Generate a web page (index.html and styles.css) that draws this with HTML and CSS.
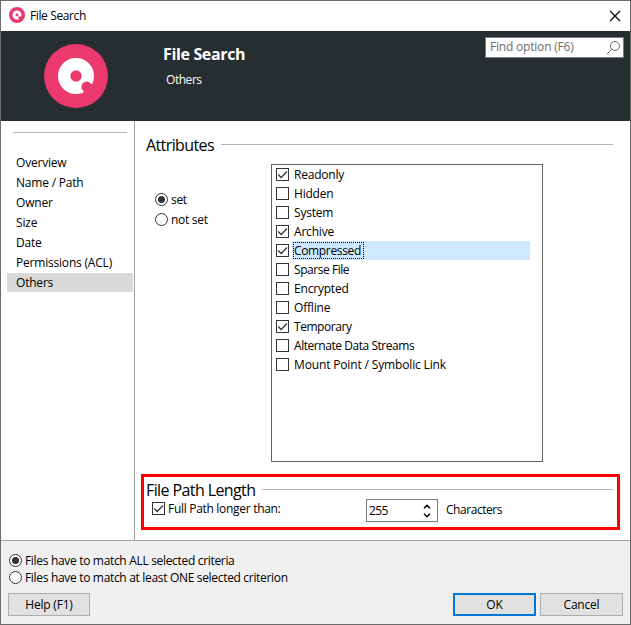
FILE: index.html
```html
<!DOCTYPE html>
<html lang="en">
<head>
<meta charset="utf-8">
<title>File Search</title>
<link rel="stylesheet" href="styles.css">
</head>
<body>
<svg class="defs" width="0" height="0">
  <symbol id="logo" viewBox="0 0 64 64">
    <circle cx="32" cy="32" r="32" fill="#ec3a6e"/>
    <circle cx="32" cy="32" r="18" fill="#fff"/>
    <circle cx="32" cy="32" r="5.700" fill="#ec3a6e"/>
    <circle cx="42.700" cy="42.700" r="5.300" fill="#ec3a6e"/>
    <path d="M42.700 42.700L47 40l4 0-10 12-1.500-4z" fill="#ec3a6e"/>
  </symbol>
  <symbol id="tick" viewBox="0 0 13 13">
    <path d="M2.200 6.500l3 3 5.800-6" fill="none" stroke="#333" stroke-width="1.300"/>
  </symbol>
</svg>
<div class="window">
  <header class="titlebar">
    <svg class="app-icon"><use href="#logo"/></svg>
    <span class="caption">File Search</span>
    <svg class="close" viewBox="0 0 12 12"><path d="M1 1l10 10M11 1L1 11" stroke="#000" stroke-width="1.200"/></svg>
  </header>
  <div class="banner">
    <svg class="logo"><use href="#logo"/></svg>
    <div class="banner-text">
      <h1>File Search</h1>
      <p>Others</p>
    </div>
    <div class="search">
      <span>Find option (F6)</span>
      <svg viewBox="0 0 14 14"><path d="M5.700 8.300L1 13" stroke="#666" stroke-width="1"/><circle cx="9" cy="5" r="4.500" fill="none" stroke="#666"/></svg>
    </div>
  </div>
  <div class="body">
    <nav class="sidebar">
      <ul>
        <li>Overview</li>
        <li>Name / Path</li>
        <li>Owner</li>
        <li>Size</li>
        <li>Date</li>
        <li>Permissions (ACL)</li>
        <li class="current">Others</li>
      </ul>
    </nav>
    <main class="content">
      <h2 class="section-title"><span>Attributes</span></h2>
      <div class="attributes">
        <div class="radios">
          <div class="option"><i class="radio on"></i><span>set</span></div>
          <div class="option"><i class="radio"></i><span>not set</span></div>
        </div>
        <ul class="listbox">
          <li><i class="box"><svg><use href="#tick"/></svg></i><span>Readonly</span></li>
          <li><i class="box"></i><span>Hidden</span></li>
          <li><i class="box"></i><span>System</span></li>
          <li><i class="box"><svg><use href="#tick"/></svg></i><span>Archive</span></li>
          <li class="selected"><i class="box"><svg><use href="#tick"/></svg></i><span><b>Compressed</b></span></li>
          <li><i class="box"></i><span class="tight">Sparse File</span></li>
          <li><i class="box"></i><span>Encrypted</span></li>
          <li><i class="box"></i><span>Offline</span></li>
          <li><i class="box"><svg><use href="#tick"/></svg></i><span class="tight">Temporary</span></li>
          <li><i class="box"></i><span class="tight">Alternate Data Streams</span></li>
          <li><i class="box"></i><span class="loose">Mount Point / Symbolic Link</span></li>
        </ul>
      </div>
      <section class="path-length">
        <h2 class="section-title"><span>File Path Length</span></h2>
        <div class="path-row">
          <div class="path-check"><i class="box"><svg><use href="#tick"/></svg></i><span>Full Path longer than:</span></div>
          <div class="spinner"><span>255</span>
            <svg viewBox="0 0 8 14"><path d="M1 4.300l3-3 3 3M1 9.700l3 3 3-3" fill="none" stroke="#000" stroke-width="1.500"/></svg>
          </div>
          <span class="unit">Characters</span>
        </div>
      </section>
    </main>
  </div>
  <footer class="footer">
    <div class="option"><i class="radio on"></i><span>Files have to match ALL selected criteria</span></div>
    <div class="option"><i class="radio"></i><span>Files have to match at least ONE selected criterion</span></div>
    <div class="buttons">
      <button>Help (F1)</button>
      <button class="primary">OK</button>
      <button>Cancel</button>
    </div>
  </footer>
</div>
</body>
</html>
```
FILE: styles.css
```css
* { box-sizing: border-box; margin: 0; padding: 0; }
body { font: 12px/16px "Open Sans", "Noto Sans", sans-serif; letter-spacing: -0.2px; color: #000; }
ul { list-style: none; }
svg { display: block; }
.tight { letter-spacing: -0.450px; }
.loose { letter-spacing: -0.150px; }
.defs { position: absolute; }
.window { width: 631px; height: 625px; border: 1px solid #6b6b6b; background: #fff; display: flex; flex-direction: column; white-space: nowrap; }
.titlebar { height: 30px; flex: none; display: flex; align-items: center; padding: 0 9px 0 8px; }
.app-icon { width: 16px; height: 16px; margin-top: -2px; }
.caption { margin-left: 5px; flex: 1; letter-spacing: -0.380px; }
.close { width: 12px; height: 12px; margin-top: -1px; }
.banner { height: 90px; flex: none; background: #262e31; color: #fff; display: flex; align-items: flex-start; padding-right: 6px; }
.logo { width: 64px; height: 64px; margin: 13px 0 0 43px; }
.banner-text { margin: 12px 0 0 55px; flex: 1; }
h1 { font-size: 16px; line-height: 22px; font-weight: 700; letter-spacing: -0.350px; }
.banner-text p { margin: 7px 0 0 3px; letter-spacing: -0.450px; }
.search { width: 139px; height: 21px; margin-top: 6px; border: 1px solid #7a7a7a; background: #fff; color: #6d6d6d; display: flex; justify-content: space-between; padding: 1px 3px 0 4px; }
.search svg { width: 14px; height: 14px; margin-top: 2px; }
.body { height: 419px; flex: none; display: flex; }
.sidebar { width: 134px; border-right: 1px solid #a0a0a0; padding: 11px 1px 0 6px; }
.sidebar::before { content: ""; display: block; height: 1px; margin: 0 6px; background: #b4b4b4; }
.sidebar ul { padding-top: 20px; }
.sidebar li { height: 20px; padding: 1px 9px 0; line-height: 18px; }
.sidebar .current { height: 19px; background: #d9d9d9; }
.content { flex: 1; padding: 13px 10px 0 6px; }
.section-title { display: flex; align-items: center; height: 22px; font-size: 16px; font-weight: 400; letter-spacing: -0.600px; }
.section-title::after { content: ""; flex: 1; height: 1px; background: #b4b4b4; margin: -1px 0 0 7px; }
.content > .section-title { padding: 0 7px 0 5px; height: 24px; margin-top: -1px; }
.attributes { display: flex; margin-top: 7px; }
.radios { width: 130px; padding: 26px 0 0 14px; display: flex; flex-direction: column; gap: 1px; }
.option { display: flex; align-items: center; height: 19px; letter-spacing: -0.300px; }
.radio { width: 13px; height: 13px; border: 1px solid #333; border-radius: 50%; background: #fff; flex: none; margin-right: 3px; display: flex; }
.radio.on::after { content: ""; width: 7px; height: 7px; border-radius: 50%; background: #333; margin: 2px; }
.listbox { width: 272px; height: 298px; border: 1px solid #646464; padding: 0 12px 0 4px; }
.listbox li { height: 19px; display: flex; align-items: center; }
.listbox li > span { flex: 1; line-height: 19px; height: 19px; margin-left: 3px; padding-left: 2px; }
.selected > span { background: #cde8ff; }
.selected b { display: inline-block; height: 17px; line-height: 15px; font-weight: 400; letter-spacing: -0.350px; border: 1px dotted #000; margin: 1px 0 0 -1px; padding-right: 2px; vertical-align: top; }
.box { width: 13px; height: 13px; border: 1px solid #333; background: #fff; flex: none; }
.box svg { width: 13px; height: 13px; margin: -1px; }
.path-length { margin-top: 12px; width: 479px; height: 56px; border: 3px solid #f00; padding: 2px 4px 0 2px; }
.path-length .section-title { letter-spacing: -0.600px; }
.path-row { display: flex; align-items: flex-start; margin-top: -4px; }
.path-check { display: flex; align-items: center; width: 220px; padding-left: 6px; height: 19px; margin-top: 2px; letter-spacing: -0.300px; }
.path-check span { margin-left: 3px; }
.spinner { width: 72px; height: 23px; border: 1px solid #7a7a7a; display: flex; align-items: center; justify-content: space-between; padding: 0 6px 0 2px; margin-top: 2px; letter-spacing: -0.600px; }
.spinner svg { width: 8px; height: 14px; }
.unit { margin: 5px 0 0 8px; letter-spacing: -0.450px; }
.footer { flex: 1; background: #f0f0f0; border-top: 1px solid #a0a0a0; padding: 11px 7px 0 7px; }
.footer .option { height: 17px; letter-spacing: -0.320px; }
.footer .option .radio { margin-left: 1px; }
.buttons { display: flex; gap: 4px; margin-top: 7px; }
button { width: 83px; height: 23px; border: 1px solid #adadad; background: #e1e1e1; font: inherit; letter-spacing: inherit; color: #000; }
button:first-child { width: 82px; margin-right: auto; }
.primary { border: 2px solid #0078d7; }
```
